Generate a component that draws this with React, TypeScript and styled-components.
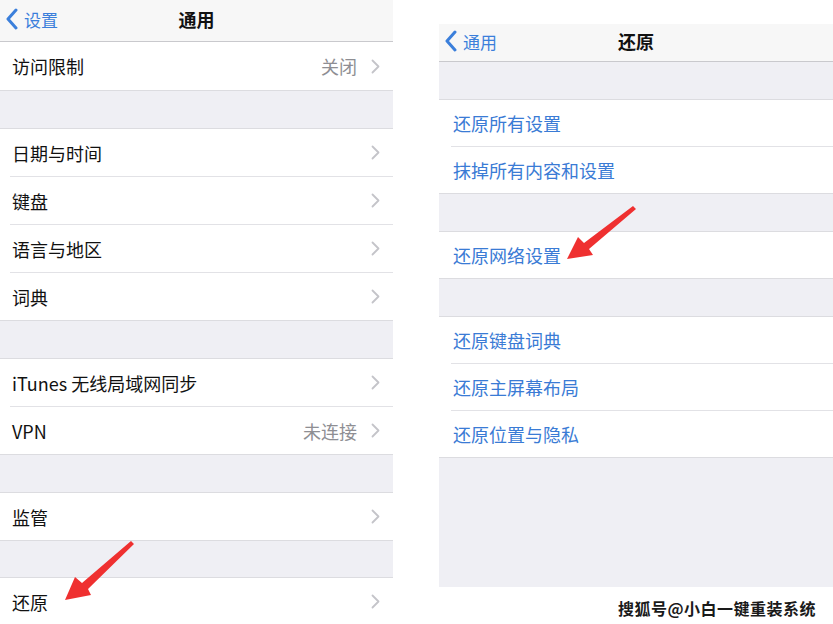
import React from 'react';
import styled, { createGlobalStyle } from 'styled-components';

const GlobalStyle = createGlobalStyle`
  body {
    margin: 0;
    background: #ffffff;
    font-family: "Noto Sans CJK SC", "Noto Sans", sans-serif;
  }
`;

const Page = styled.div`
  position: relative;
  display: flex;
  gap: 46px;
  width: 833px;
  height: 624px;
  overflow: hidden;
  background: #ffffff;
`;

const Column = styled.div<{ $top: number; $width: number }>`
  display: flex;
  flex-direction: column;
  width: ${p => p.$width}px;
  padding-top: ${p => p.$top}px;
`;

const Screen = styled.div<{ $height: number }>`
  display: flex;
  flex-direction: column;
  height: ${p => p.$height}px;
  background: #efeff4;
  overflow: hidden;
`;

const NavBar = styled.div<{ $height: number }>`
  display: grid;
  grid-template-columns: 1fr auto 1fr;
  align-items: center;
  height: ${p => p.$height}px;
  padding-bottom: 3px;
  box-sizing: border-box;
  background: #f7f7f7;
  border-bottom: 1px solid #c9c9cd;
  flex-shrink: 0;
`;

const BackButton = styled.div`
  display: flex;
  align-items: center;
  gap: 6px;
  padding-left: 5px;
  color: #3b7fdb;
  font-size: 17px;
`;

const NavTitle = styled.div`
  font-size: 18px;
  font-weight: 600;
  color: #111111;
`;

const Spacer = styled.div<{ $height?: number }>`
  height: ${p => p.$height ?? 37}px;
  flex-shrink: 0;
`;

const Group = styled.div<{ $noTop?: boolean }>`
  background: #ffffff;
  border-top: ${p => (p.$noTop ? 'none' : '1px solid #dcdce0')};
  border-bottom: 1px solid #dcdce0;
  flex-shrink: 0;
`;

const Row = styled.div<{ $inset: number; $height: number }>`
  display: flex;
  align-items: center;
  height: ${p => p.$height}px;
  margin-left: ${p => p.$inset}px;
  padding-left: 2px;
  padding-right: 13px;

  & + & {
    border-top: 1px solid #e2e2e6;
  }
`;

const Label = styled.div<{ $link?: boolean }>`
  flex: 1;
  font-size: 18px;
  color: ${p => (p.$link ? '#3a7bd5' : '#111111')};
`;

const Detail = styled.span`
  margin-right: 14px;
  font-size: 18px;
  color: #8e8e93;
`;

const Watermark = styled.div`
  margin-top: 9px;
  padding-right: 17px;
  text-align: right;
  font-size: 16px;
  font-weight: 700;
  color: #1a1a1a;
  letter-spacing: 0.5px;
  text-shadow: 0 0 1px #fff, 1px 1px 0 #fff;
`;

const Overlay = styled.svg`
  position: absolute;
  left: 0;
  top: 0;
  pointer-events: none;
`;

const BackChevron = () => (
  <svg width="13" height="22" viewBox="0 0 13 22">
    <path d="M11 2 L3 11 L11 20" fill="none" stroke="#3b7fdb" strokeWidth="3" strokeLinecap="round" strokeLinejoin="round" />
  </svg>
);

const Chevron = () => (
  <svg width="9" height="15" viewBox="0 0 9 15">
    <path d="M1.5 1.5 L7.5 7.5 L1.5 13.5" fill="none" stroke="#c4c4c9" strokeWidth="1.8" strokeLinecap="round" strokeLinejoin="round" />
  </svg>
);

type Item = { label: string; detail?: string };

const SettingsGroup: React.FC<{ items: Item[]; noTop?: boolean; rowHeight?: number }> = ({ items, noTop, rowHeight = 47 }) => (
  <Group $noTop={noTop}>
    {items.map(item => (
      <Row key={item.label} $inset={10} $height={rowHeight}>
        <Label>{item.label}</Label>
        {item.detail && <Detail>{item.detail}</Detail>}
        <Chevron />
      </Row>
    ))}
  </Group>
);

const ResetGroup: React.FC<{ items: string[] }> = ({ items }) => (
  <Group>
    {items.map(label => (
      <Row key={label} $inset={12} $height={46}>
        <Label $link>{label}</Label>
      </Row>
    ))}
  </Group>
);

const App: React.FC = () => (
  <>
    <GlobalStyle />
    <Page>
      <Column $top={0} $width={393}>
        <Screen $height={624}>
          <NavBar $height={42}>
            <BackButton>
              <BackChevron />
              设置
            </BackButton>
            <NavTitle>通用</NavTitle>
            <div />
          </NavBar>
          <SettingsGroup noTop rowHeight={48} items={[{ label: '访问限制', detail: '关闭' }]} />
          <Spacer />
          <SettingsGroup items={[{ label: '日期与时间' }, { label: '键盘' }, { label: '语言与地区' }, { label: '词典' }]} />
          <Spacer />
          <SettingsGroup items={[{ label: 'iTunes 无线局域网同步' }, { label: 'VPN', detail: '未连接' }]} />
          <Spacer />
          <SettingsGroup items={[{ label: '监管' }]} />
          <Spacer $height={36} />
          <SettingsGroup items={[{ label: '还原' }]} />
        </Screen>
      </Column>

      <Column $top={24} $width={394}>
        <Screen $height={563}>
          <NavBar $height={38}>
            <BackButton>
              <BackChevron />
              通用
            </BackButton>
            <NavTitle>还原</NavTitle>
            <div />
          </NavBar>
          <Spacer />
          <ResetGroup items={['还原所有设置', '抹掉所有内容和设置']} />
          <Spacer />
          <ResetGroup items={['还原网络设置']} />
          <Spacer />
          <ResetGroup items={['还原键盘词典', '还原主屏幕布局', '还原位置与隐私']} />
        </Screen>
        <Watermark>搜狐号@小白一键重装系统</Watermark>
      </Column>

      <Overlay width="833" height="624" viewBox="0 0 833 624">
        <polygon points="65,600 75,577 82,583 131,541 134,544 88,589 91,595" fill="#ef3030" />
        <polygon points="567,259 578,237 584,243 633,206 636,209 589,249 593,255" fill="#ef3030" />
      </Overlay>
    </Page>
  </>
);

export default App;
